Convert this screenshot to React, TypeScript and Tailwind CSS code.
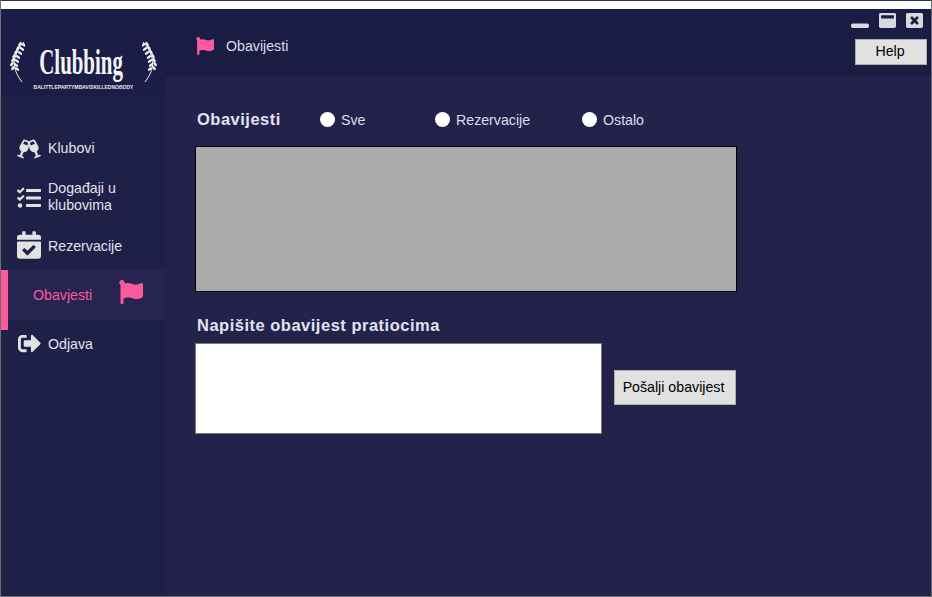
import React from "react";
import {FaCalendarCheck, FaFlag, FaGlassCheers, FaSignOutAlt, FaTasks, FaWindowClose, FaWindowMaximize, FaWindowMinimize} from "react-icons/fa";

const Wreath = ({flip}: {flip?: boolean}) => (
  <svg width="15" height="42" viewBox="0 0 15 42" className={flip ? "-scale-x-100" : ""}>
    <path d="M12 41 C6 33 3 26 5 17 C7 10 10 5 14 1" fill="none" stroke="#f2f2f6" strokeWidth="1"/>
    {[[12, 2], [10, 6], [8, 10], [6, 14], [5, 18], [4, 22], [5, 26]].map(([x, y]) => (
      <g key={y}>
        <ellipse cx={x - 2} cy={y + 1} rx="1.3" ry="2.5" fill="#f2f2f6" transform={`rotate(35 ${x - 2} ${y + 1})`}/>
        <ellipse cx={x + 2} cy={y + 2} rx="1.3" ry="2.5" fill="#f2f2f6" transform={`rotate(-55 ${x + 2} ${y + 2})`}/>
      </g>
    ))}
  </svg>
);

const NavItem = ({icon, children, className}: {icon: React.ReactNode; children: React.ReactNode; className?: string}) => (
  <div className={`flex items-center pl-[16px] gap-[7px] text-[14.2px] leading-[17px] text-[#e2e2ee] ${className ?? "h-[49px]"}`}>
    <div className="w-[24px] flex justify-center">{icon}</div>
    <div className="w-[90px]">{children}</div>
  </div>
);

const Radio = ({label, className}: {label: string; className: string}) => (
  <label className={`flex items-center gap-[6px] text-[14.2px] text-[#dcdcec] ${className}`}>
    <span className="w-[15px] h-[15px] rounded-full bg-white"/>
    <span className="mt-[2px]">{label}</span>
  </label>
);

export default function App() {
  return (
    <div className="w-[932px] h-[597px] flex flex-col overflow-hidden bg-[#22224a] border-x border-b border-[#6b6f6f] font-['Liberation_Sans',Arial,sans-serif]">
      <div className="h-[9px] shrink-0 bg-white border-t border-[#33334d]"/>
      <div className="flex flex-1 min-h-0">
        <aside className="w-[165px] shrink-0 bg-[#1f2047]">
          <div className="h-[88px] bg-[#1c1d47] flex items-start justify-center gap-[4px] pt-[32px]">
            <Wreath/>
            <div className="w-[109px] flex flex-col items-center mt-[4px]">
              <div className="font-['Liberation_Serif',serif] font-bold text-[#f4f4f8] text-[36px] leading-[34px] scale-x-[0.58] -translate-x-[2px] whitespace-nowrap">Clubbing</div>
              <div className="text-[#e8e8f0] text-[5px] leading-[6px] font-bold whitespace-nowrap mt-[5px]">BALITTLEPARTYMBAVISKILLEDNOBODY</div>
            </div>
            <Wreath flip/>
          </div>
          <div className="pt-[27px]">
            <NavItem icon={<FaGlassCheers size={24} color="#e2e2e2"/>}>Klubovi</NavItem>
            <NavItem icon={<FaTasks size={24} color="#e2e2e2"/>}><div className="-mt-[2px]">Događaji u klubovima</div></NavItem>
            <NavItem className="h-[48px]" icon={<FaCalendarCheck size={28} color="#e2e2e2" className="-mt-[3px]"/>}>Rezervacije</NavItem>
            <div className="flex h-[50px]">
              <div className="w-[7px] h-[60px] shrink-0 bg-[#fb5a9c]"/>
              <div className="flex-1 flex items-center bg-[#25254f] pl-[25px] text-[14.2px] text-[#fb5a9c]">
                <span className="w-[86px] mt-[2px]">Obavjesti</span>
                <FaFlag size={24} color="#fb5a9c" className="-mt-[6px]"/>
              </div>
            </div>
            <NavItem icon={<FaSignOutAlt size={23} color="#e2e2e2" className="-mt-[3px]"/>}>Odjava</NavItem>
          </div>
        </aside>
        <main className="flex-1 flex flex-col min-w-0">
          <header className="h-[67px] shrink-0 bg-[#1b1c43] flex justify-between pl-[30px]">
            <div className="flex items-center gap-[12px] h-[74px] text-[14.2px] text-[#dcdcec]">
              <FaFlag size={18} color="#fb5a9c"/>
              <span className="mt-[2px]">Obavijesti</span>
            </div>
            <div className="flex flex-col items-end pr-[4px] pt-[3px]">
              <div className="flex items-center gap-[10px] h-[16px] pr-[4px]">
                <FaWindowMinimize size={18} color="#d8d8e0"/>
                <FaWindowMaximize size={17} color="#d8d8e0"/>
                <FaWindowClose size={17} color="#d8d8e0"/>
              </div>
              <button className="mt-[11px] w-[72px] h-[26px] pr-[2px] bg-[#e1e1e1] border border-[#adadad] text-[14.2px] text-black">Help</button>
            </div>
          </header>
          <div className="pl-[29px] pt-[33px]">
            <div className="flex items-center h-[21px]">
              <h2 className="pl-[2px] w-[125px] text-[16.5px] font-bold text-[#e2e2f2] tracking-[0.5px]">Obavijesti</h2>
              <Radio label="Sve" className="w-[115px]"/>
              <Radio label="Rezervacije" className="w-[147px]"/>
              <Radio label="Ostalo" className="w-[80px]"/>
            </div>
            <div className="mt-[16px] w-[542px] h-[146px] bg-[#ababab] border border-black"/>
            <h2 className="pl-[2px] mt-[24px] h-[19px] leading-[19px] text-[16.5px] font-bold text-[#e2e2f2] tracking-[0.5px]">Napišite obavijest pratiocima</h2>
            <div className="mt-[8px] flex items-center gap-[12px]">
              <textarea className="w-[407px] h-[91px] bg-white border border-[#7a7a7a] resize-none"/>
              <button className="w-[122px] h-[35px] -mt-[2px] pr-[3px] bg-[#e1e1e1] border border-[#adadad] text-[14.2px] text-black">Pošalji obavijest</button>
            </div>
          </div>
        </main>
      </div>
    </div>
  );
}
